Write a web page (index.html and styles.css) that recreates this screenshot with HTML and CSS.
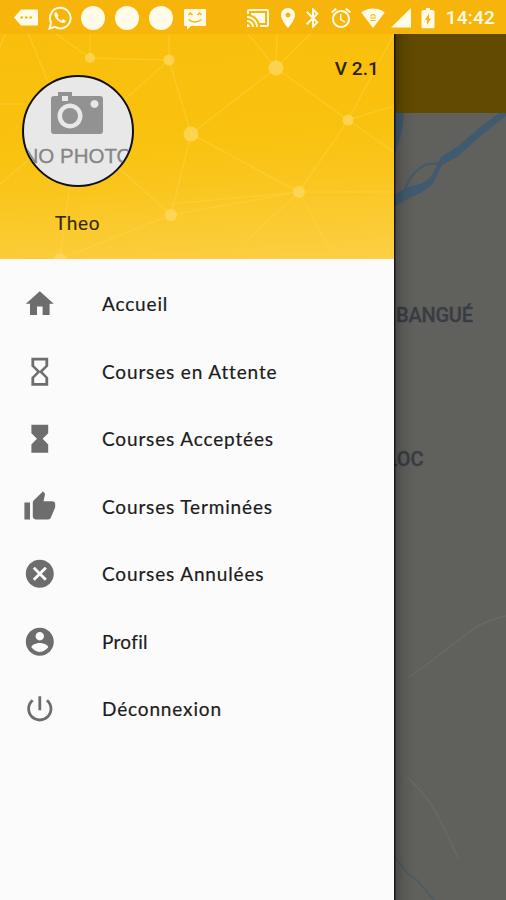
FILE: index.html
```html
<!DOCTYPE html>
<html lang="fr">
<head>
<meta charset="utf-8">
<title>Menu</title>
<link rel="stylesheet" href="styles.css">
</head>
<body>
<div class="status">
  <svg class="s-icon" viewBox="0 0 24 24"><path fill-rule="evenodd" d="M7 3.500h16a1 1 0 0 1 1 1v14a1 1 0 0 1-1 1H7L0 11.500zM6.500 10.500v2h2.500v-2zm4.500 0v2h2.500v-2zm4.500 0v2H18v-2z"/></svg>
  <svg class="s-icon" viewBox="0 0 24 24"><path fill="none" stroke="#fffbe8" stroke-width="2" d="M1.500 22.500l1.600-5.800A10.300 10.300 0 1 1 7 20.900z"/><path d="M8.500 6.200c-.5-.5-1.200-.1-1.700.6-2.100 3.400 4.300 10.300 8.500 10.300 1.400 0 2.600-1.200 2.500-2.600L15 13l-1.400 1.600c-2-.7-3.200-2-4-3.700l1-1.400z"/></svg>
  <svg class="s-icon" viewBox="0 0 24 24"><circle cx="12" cy="12" r="12"/></svg>
  <svg class="s-icon" viewBox="0 0 24 24"><circle cx="12" cy="12" r="12"/></svg>
  <svg class="s-icon" viewBox="0 0 24 24"><circle cx="12" cy="12" r="12"/></svg>
  <svg class="s-icon" viewBox="0 0 24 24"><path d="M2 3h20a1 1 0 0 1 1 1v15a1 1 0 0 1-1 1H8l-4 3.500V20H2a1 1 0 0 1-1-1V4a1 1 0 0 1 1-1z"/><path class="s-cut" d="M5.500 9l2-2 2 2M14.500 9l2-2 2 2M5.500 13.500q6.500 5 13 0"/></svg>
  <span></span>
  <svg class="s-icon" viewBox="0 0 24 24"><path d="M1 18v3h3c0-1.660-1.340-3-3-3zm0-4v2c2.760 0 5 2.240 5 5h2c0-3.870-3.130-7-7-7zm18-7H5v1.630c3.960 1.280 7.090 4.410 8.370 8.370H19V7zM1 10v2c4.970 0 9 4.030 9 9h2c0-6.080-4.930-11-11-11zm20-7H3c-1.100 0-2 .9-2 2v3h2V5h18v14h-7v2h7c1.100 0 2-.9 2-2V5c0-1.100-.9-2-2-2z"/></svg>
  <svg class="s-icon" viewBox="0 0 24 24"><path d="M12 2C8.130 2 5 5.130 5 9c0 5.250 7 13 7 13s7-7.750 7-13c0-3.870-3.130-7-7-7zm0 9.500c-1.380 0-2.500-1.120-2.500-2.500s1.120-2.500 2.500-2.500 2.500 1.120 2.500 2.500-1.120 2.500-2.500 2.500z"/></svg>
  <svg class="s-icon" viewBox="0 0 24 24"><path d="M17.710 7.710L12 2h-1v7.590L6.410 5 5 6.410 10.590 12 5 17.590 6.410 19 11 14.410V22h1l5.710-5.710-4.300-4.290 4.300-4.290zM13 5.830l1.880 1.880L13 9.590V5.830zm1.880 10.460L13 18.170v-3.760l1.880 1.880z"/></svg>
  <svg class="s-icon" viewBox="0 0 24 24"><path d="M22 5.720l-4.600-3.860-1.290 1.530 4.600 3.860L22 5.720zM7.880 3.390L6.600 1.860 2 5.710l1.290 1.530 4.590-3.850zM12.500 8H11v6l4.750 2.850.75-1.230-4-2.370V8zM12 4c-4.970 0-9 4.030-9 9s4.020 9 9 9c4.970 0 9-4.030 9-9s-4.030-9-9-9zm0 16c-3.870 0-7-3.130-7-7s3.130-7 7-7 7 3.130 7 7-3.130 7-7 7z"/></svg>
  <svg class="s-icon" viewBox="0 0 24 24"><path d="M12 22L.3 6.500C.8 6.100 5.300 2.500 12 2.500s11.200 3.600 11.700 4z"/><path class="s-cut thin" d="M9.500 10.500q2.500-4 5 0M9 12h6M9.500 14.500h5"/></svg>
  <svg class="s-icon" viewBox="0 0 24 24"><path d="M2 21.500h20V2z"/></svg>
  <svg class="s-icon" viewBox="0 0 24 24"><path fill-rule="evenodd" d="M16.500 4H14V2h-4v2H7.500Q5.500 4 5.500 5.500V21q0 1.300 1.300 1.300h10.400q1.300 0 1.300-1.300V5.500Q18.500 4 16.500 4zM11 19v-5H9l4-6.500v5h2z"/></svg>
  <span class="clock">14:42</span>
</div>
<div class="screen">
  <nav class="drawer">
    <header class="head">
      <svg class="mesh" viewBox="0 0 394 225">
        <g class="mesh-lines">
          <path d="M17-28L90 24L169 26L191 100L276 34L348 86L299 158L171 181L60 225M17-28L-5 25M17-28L48 48M90 24V-34M169 26L120 70M169 26V-34M276 34L240-10M276 34L278-34M276 34L345-34M348 86L394 0M348 86L394 72M348 86L394 118M299 158H394M299 158L191 100M299 158L245 208M299 158L335 225M191 100L171 181L120 135M0 150L60 100M0 70H25M60 225L70 150M299 158L171 170"/>
        </g>
        <g class="mesh-dots"><circle cx="17" cy="-29" r="6"/><circle cx="90" cy="24" r="5"/><circle cx="169" cy="26" r="5.500"/><circle cx="191" cy="100" r="7.500"/><circle cx="276" cy="34" r="7.500"/><circle cx="348" cy="86" r="5.500"/><circle cx="299" cy="158" r="6"/><circle cx="171" cy="181" r="6"/><circle cx="60" cy="225" r="6"/></g>
      </svg>
      <div class="avatar">
        <svg class="camera" viewBox="0 0 52 44"><path fill-rule="evenodd" d="M3 5h4V1h14v4h28q3 0 3 3v32q0 3-3 3H3q-3 0-3-3V8q0-3 3-3zm8 0v5h6V5zM19 12.500a12.500 12.500 0 1 0 .01 0zM43.500 9a4 4 0 1 0 .01 0z"/><circle cx="19" cy="25" r="8"/></svg>
        <span class="nophoto">NO PHOTO</span>
      </div>
      <span class="name">Theo</span>
      <span class="version">V 2.1</span>
    </header>
    <ul class="menu">
      <li><svg viewBox="0 0 24 24"><path d="M10 20v-6h4v6h5v-8h3L12 3 2 12h3v8z"/></svg><span>Accueil</span></li>
      <li><svg viewBox="0 0 24 24"><path d="M6 2v6h.01L6 8.010 10 12l-4 4 .01.010H6V22h12v-5.990h-.01L18 16l-4-4 4-3.990-.01-.010H18V2H6zm10 14.500V20H8v-3.500l4-4 4 4zm-4-5l-4-4V4h8v3.500l-4 4z"/></svg><span>Courses en Attente</span></li>
      <li><svg viewBox="0 0 24 24"><path d="M6 2v6h.01L6 8.010 10 12l-4 4 .01.010H6V22h12v-5.990h-.01L18 16l-4-4 4-3.990-.01-.010H18V2H6z"/></svg><span>Courses Acceptées</span></li>
      <li><svg viewBox="0 0 24 24"><path d="M1 21h4V9H1v12zm22-11c0-1.100-.9-2-2-2h-6.310l.95-4.570.03-.32c0-.41-.17-.79-.44-1.060L14.170 1 7.590 7.590C7.220 7.950 7 8.450 7 9v10c0 1.100.9 2 2 2h9c.83 0 1.540-.5 1.840-1.220l3.020-7.050c.09-.23.14-.47.14-.73v-2z"/></svg><span>Courses Terminées</span></li>
      <li><svg viewBox="0 0 24 24"><path d="M12 2C6.470 2 2 6.470 2 12s4.470 10 10 10 10-4.470 10-10S17.530 2 12 2zm5 13.590L15.590 17 12 13.410 8.410 17 7 15.590 10.590 12 7 8.410 8.410 7 12 10.590 15.590 7 17 8.410 13.410 12 17 15.590z"/></svg><span>Courses Annulées</span></li>
      <li><svg viewBox="0 0 24 24"><path d="M12 2C6.480 2 2 6.480 2 12s4.480 10 10 10 10-4.480 10-10S17.520 2 12 2zm0 3c1.660 0 3 1.340 3 3s-1.340 3-3 3-3-1.340-3-3 1.340-3 3-3zm0 14.200c-2.500 0-4.710-1.280-6-3.220.03-1.990 4-3.080 6-3.080 1.990 0 5.970 1.090 6 3.080-1.290 1.940-3.500 3.220-6 3.220z"/></svg><span class="narrow">Profil</span></li>
      <li><svg viewBox="0 0 24 24"><path d="M13 3h-2v10h2V3zm4.830 2.170l-1.420 1.420C17.990 7.860 19 9.810 19 12c0 3.870-3.130 7-7 7s-7-3.130-7-7c0-2.190 1.010-4.140 2.580-5.420L6.170 5.170C4.230 6.820 3 9.260 3 12c0 4.970 4.030 9 9 9s9-4.030 9-9c0-2.740-1.230-5.180-3.170-6.830z"/></svg><span>Déconnexion</span></li>
    </ul>
  </nav>
  <main class="app">
    <div class="toolbar"></div>
    <svg class="map" viewBox="394 113 112 787">
      <g class="river">
        <path d="M394 113h10q-1 18-7 34l-3 12z"/>
        <path d="M499 113h7v3l-23 18-26 23-15 8-8 17q-9 11-23 15l-17 10v-12l14-8q18-3 24-12l9-18 16-10 22-19z"/>
        <path class="branch" d="M404 195q3-21 23-31l18-1"/>
      </g>
      <path class="road" d="M408 678q20-14 39-29l29-22q15-8 30-11M408 778q23 21 36 50l14 30"/>
      <path class="stream" d="M394 856l13 17 10 7 17 20"/>
      <text x="396" y="321.500" textLength="77">BANGUÉ</text>
      <text x="386.500" y="465.500" textLength="37">LOC</text>
    </svg>
  </main>
</div>
</body>
</html>
```
FILE: styles.css
```css
* { box-sizing: border-box; }
body {
  margin: 0;
  width: 506px;
  height: 900px;
  overflow: hidden;
  display: flex;
  flex-direction: column;
  font-family: Lato, "Liberation Sans", sans-serif;
}

.status {
  height: 34px;
  flex: none;
  display: grid;
  grid-template-columns: repeat(6, 33.8px) 31.2px 31px 28px 23px 32px 32px 24px 31px 53px;
  align-items: center;
  justify-items: center;
  padding-left: 9px;
  background: #f7b50c;
}
.s-icon { width: 24px; height: 24px; fill: #fffbe8; }
.s-cut { fill: none; stroke: #f7b50c; stroke-width: 1.5; }
.s-cut.thin { stroke-width: 1.2; }
.clock {
  font: 500 19px/34px Roboto, sans-serif;
  letter-spacing: .2px;
  color: #fffbe8;
  padding-top: 1px;
}

.screen { flex: 1; display: flex; min-height: 0; }

.drawer { width: 394px; flex: none; background: #fbfbfb; }
.head {
  position: relative;
  overflow: hidden;
  height: 225px;
  padding: 41px 15px 0 22px;
  display: grid;
  grid-template-columns: 112px 1fr;
  grid-template-rows: 112px 72px;
  background: linear-gradient(176deg, #f9be0c 0%, #f9c20e 45%, #fac61e 66%, #fccf45 100%);
}
.mesh { position: absolute; left: 0; top: 0; width: 394px; height: 225px; }
.mesh-lines { fill: none; stroke: #ffd84d; stroke-width: 1.5; opacity: .38; }
.mesh-dots { fill: #ffda66; opacity: .7; }
.avatar {
  position: relative;
  width: 112px;
  height: 112px;
  border: 2.8px solid #111;
  border-radius: 50%;
  background: #e8e8e8;
  overflow: hidden;
  display: flex;
  flex-direction: column;
  align-items: center;
}
.camera { width: 52px; height: 44px; margin: 14px 3px 0 0; fill: #929292; flex: none; }
.nophoto {
  margin-top: 8px;
  font: 20.5px/26px "Liberation Sans", sans-serif;
  color: #858585;
  white-space: nowrap;
  -webkit-text-stroke: .3px #858585;
}
.name {
  position: relative;
  grid-row: 2;
  padding: 24px 0 0 33px;
  font-size: 19px;
  line-height: 24px;
  letter-spacing: .7px;
  color: #33290c;
  -webkit-text-stroke: .15px #33290c;
}
.version {
  position: relative;
  grid-column: 2;
  grid-row: 1;
  justify-self: end;
  margin-top: -18px;
  font: 500 19px/24px Roboto, sans-serif;
  letter-spacing: .1px;
  color: #2b2307;
}

.menu { list-style: none; margin: 0; padding: 11.5px 0 0; }
.menu li { height: 67.5px; display: flex; align-items: center; padding-left: 23px; }
.menu svg { width: 33.6px; height: 33.6px; fill: #6d6d6d; flex: none; }
.menu span {
  margin-left: 45.4px;
  font-size: 19px;
  line-height: 24px;
  letter-spacing: .85px;
  color: #1c1c1c;
  -webkit-text-stroke: .2px #1c1c1c;
  white-space: nowrap;
}
.menu .narrow { letter-spacing: .3px; }

.app {
  position: relative;
  flex: 1;
  min-width: 0;
  display: flex;
  flex-direction: column;
  background: #60605d;
}
.app::before {
  content: "";
  position: absolute;
  inset: 0 auto 0 0;
  width: 22px;
  background: linear-gradient(90deg, rgba(0,0,0,.75) 0 1px, rgba(0,0,0,.22) 2px, rgba(0,0,0,.08) 10px, transparent);
}
.toolbar { height: 79px; flex: none; background: #624b00; }
.map { width: 112px; height: 787px; flex: none; }
.river { fill: #405b70; }
.branch { fill: none; stroke: #46596a; stroke-width: 2; }
.road { fill: none; stroke: #686a68; stroke-width: 1.5; }
.stream { fill: none; stroke: #4e5a62; stroke-width: 1.5; }
.map text { font: 500 20px Roboto, sans-serif; fill: #393c43; stroke: #393c43; stroke-width: .3px; }
```
